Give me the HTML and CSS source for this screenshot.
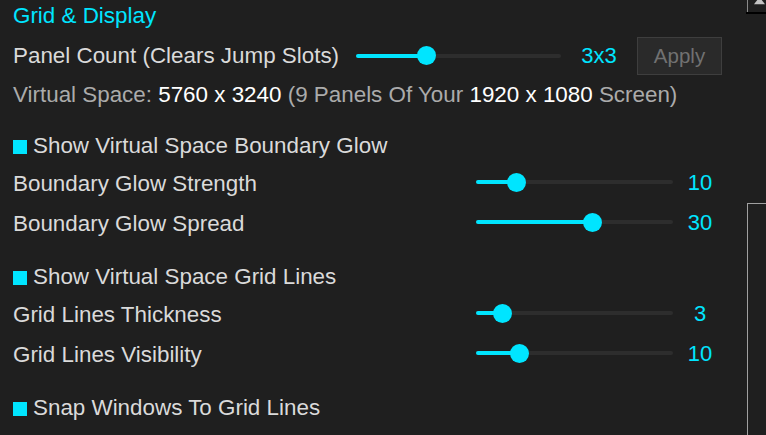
FILE: index.html
```html
<!DOCTYPE html>
<html>
<head>
<meta charset="utf-8">
<link rel="stylesheet" href="styles.css">
</head>
<body>
<div class="window">
  <div class="panel">
    <div class="section-title">Grid &amp; Display</div>

    <div class="row row-panel">
      <span class="label label-panel">Panel Count (Clears Jump Slots)</span>
      <div class="slider slider-panel">
        <div class="fill" style="width:34.6%"></div>
        <div class="thumb" style="left:34.6%"></div>
      </div>
      <span class="value value-panel">3x3</span>
      <button class="apply">Apply</button>
    </div>

    <div class="row info">Virtual Space:&nbsp;<span class="num">5760 x 3240</span>&nbsp;(9 Panels Of Your&nbsp;<span class="num">1920 x 1080</span>&nbsp;Screen)</div>

    <div class="check-row first"><span class="box"></span>Show Virtual Space Boundary Glow</div>

    <div class="row slider-row">
      <span class="label">Boundary Glow Strength</span>
      <div class="slider">
        <div class="fill" style="width:20.8%"></div>
        <div class="thumb" style="left:20.8%"></div>
      </div>
      <span class="value">10</span>
    </div>

    <div class="row slider-row">
      <span class="label">Boundary Glow Spread</span>
      <div class="slider">
        <div class="fill" style="width:58.9%"></div>
        <div class="thumb" style="left:58.9%"></div>
      </div>
      <span class="value">30</span>
    </div>

    <div class="check-row"><span class="box"></span>Show Virtual Space Grid Lines</div>

    <div class="row slider-row">
      <span class="label">Grid Lines Thickness</span>
      <div class="slider">
        <div class="fill" style="width:13.7%"></div>
        <div class="thumb" style="left:13.7%"></div>
      </div>
      <span class="value">3</span>
    </div>

    <div class="row slider-row">
      <span class="label">Grid Lines Visibility</span>
      <div class="slider">
        <div class="fill" style="width:22.3%"></div>
        <div class="thumb" style="left:22.3%"></div>
      </div>
      <span class="value">10</span>
    </div>

    <div class="check-row"><span class="box"></span>Snap Windows To Grid Lines</div>
  </div>

  <div class="scrollbar">
    <div class="scroll-up">
      <div class="scroll-edge">
        <svg class="arrow" width="19" height="12" viewBox="0 0 19 12">
          <polygon points="6,4.3 17,4.3 11.5,-3" fill="#c4c4c4"/>
        </svg>
      </div>
    </div>
    <div class="scroll-track">
      <div class="scroll-thumb"></div>
    </div>
  </div>
</div>
</body>
</html>
```

FILE: styles.css
```css
html, body {
  margin: 0;
  padding: 0;
  background: #1f1f1f;
  overflow: hidden;
}

body {
  width: 766px;
  height: 435px;
  font-family: "Liberation Sans", Arial, sans-serif;
  font-size: 22.4px;
  color: #dadada;
}

.window {
  display: flex;
  width: 766px;
  height: 435px;
}

.panel {
  width: 746px;
  padding-left: 13px;
  box-sizing: border-box;
  display: flex;
  flex-direction: column;
}

.section-title {
  height: 32px;
  line-height: 32px;
  color: #00e5ff;
}

.row {
  display: flex;
  align-items: center;
}

.row-panel {
  height: 47px;
}

.label {
  width: 463px;
  flex: none;
  white-space: nowrap;
  padding-top: 3px;
}

.label-panel {
  width: 343px;
  padding-top: 1px;
}

.slider {
  position: relative;
  width: 197px;
  height: 4px;
  border-radius: 2px;
  background: #2d2d2d;
  flex: none;
}

.slider-panel {
  width: 205px;
}

.fill {
  height: 4px;
  border-radius: 2px;
  background: #00e5ff;
}

.thumb {
  position: absolute;
  top: 50%;
  width: 19px;
  height: 19px;
  margin-left: -9.5px;
  margin-top: -9.5px;
  border-radius: 50%;
  background: #00e5ff;
}

.value {
  width: 54px;
  flex: none;
  text-align: center;
  color: #00e5ff;
  font-size: 22px;
  padding-top: 2px;
}

.value-panel {
  width: 76px;
  padding-top: 0;
}

.apply {
  width: 85px;
  height: 38px;
  box-sizing: border-box;
  background: #2a2a2a;
  border: 1px solid #3e3e3e;
  color: #717171;
  font-family: "Liberation Sans", Arial, sans-serif;
  font-size: 20.5px;
  padding: 0;
  flex: none;
}

.info {
  height: 31px;
  color: #ababab;
  white-space: nowrap;
}

.num {
  color: #ffffff;
}

.slider-row {
  height: 40px;
}

.check-row {
  display: flex;
  align-items: center;
  height: 35px;
  margin-top: 16px;
  padding-top: 2px;
  box-sizing: border-box;
  white-space: nowrap;
}

.check-row.first {
  margin-top: 17px;
}

.box {
  width: 14px;
  height: 14px;
  background: #00e5ff;
  margin-right: 6px;
  margin-top: 2px;
  flex: none;
}

.scrollbar {
  width: 20px;
  display: flex;
  flex-direction: column;
}

.scroll-up {
  height: 12px;
  border-bottom: 2px solid #000;
  padding-left: 1px;
}

.scroll-edge {
  height: 12px;
  border-left: 1px solid #8a8a8a;
}

.arrow {
  display: block;
}

.scroll-track {
  flex: 1;
  padding-top: 189px;
  padding-left: 1px;
  display: flex;
  flex-direction: column;
}

.scroll-thumb {
  flex: 1;
  border-top: 1px solid #a0a0a0;
  border-left: 1px solid #a0a0a0;
}
```
